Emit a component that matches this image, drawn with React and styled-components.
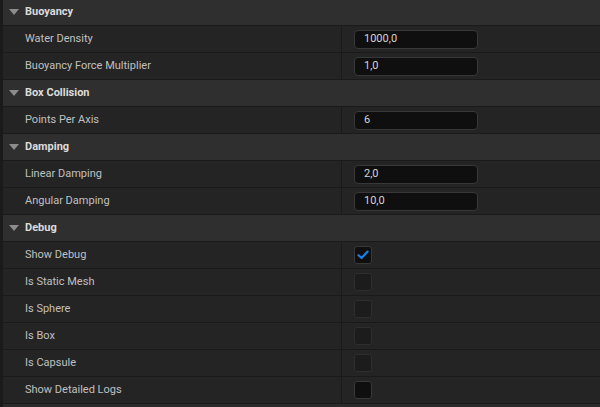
import React from 'react';
import styled, { createGlobalStyle } from 'styled-components';

const Global = createGlobalStyle`
  html, body {
    margin: 0;
    padding: 0;
    background: #1a1a1a;
    font-family: Roboto, "Liberation Sans", sans-serif;
  }
`;

const Panel = styled.div`
  width: 600px;
  height: 407px;
  background: #1a1a1a;
  padding-left: 3px;
  box-sizing: border-box;
  overflow: hidden;
`;

const Scroll = styled.div`
  margin-top: -1px;
`;

const Header = styled.div`
  height: 26px;
  border-bottom: 1px solid #1a1a1a;
  background: #2f2f2f;
  display: flex;
  align-items: center;
  color: #dcdcdc;
  font-size: 11px;
  font-weight: 700;
  padding-bottom: 1px;
  box-sizing: content-box;
  height: 25px;
`;

const Arrow = styled.span`
  width: 0;
  height: 0;
  margin-left: 6px;
  margin-right: 6px;
  margin-top: 1px;
  border-left: 5px solid transparent;
  border-right: 5px solid transparent;
  border-top: 6px solid #8c8c8c;
`;

const Row = styled.div`
  height: 26px;
  border-bottom: 1px solid #1a1a1a;
  background: #242424;
  display: grid;
  grid-template-columns: 338px 1px 1fr;
  align-items: stretch;
`;

const Label = styled.div`
  display: flex;
  align-items: center;
  padding-left: 22px;
  padding-bottom: 1px;
  color: #c0c0c0;
  font-size: 11px;
`;

const Split = styled.div`
  background: #1a1a1a;
`;

const Value = styled.div`
  display: flex;
  align-items: center;
  padding-left: 12px;
`;

const Input = styled.div`
  width: 124px;
  height: 19px;
  box-sizing: border-box;
  border: 1px solid #383838;
  border-radius: 4px;
  background: #0f0f0f;
  color: #d4d4d4;
  font-size: 11px;
  display: flex;
  align-items: center;
  padding-left: 9px;
  padding-bottom: 1px;
`;

const Check = styled.div`
  width: 18px;
  height: 18px;
  box-sizing: border-box;
  border-radius: 3px;
  border: 1px solid ${p => (p.$active ? '#383838' : '#2e2e2e')};
  background: ${p => (p.$active ? '#0f0f0f' : '#1c1c1c')};
  display: flex;
  align-items: center;
  justify-content: center;
`;

const Footer = styled.div`
  height: 3px;
  background: #2b2b2b;
`;

const sections = [
  {
    title: 'Buoyancy',
    rows: [
      { label: 'Water Density', value: '1000,0' },
      { label: 'Buoyancy Force Multiplier', value: '1,0' },
    ],
  },
  { title: 'Box Collision', rows: [{ label: 'Points Per Axis', value: '6' }] },
  {
    title: 'Damping',
    rows: [
      { label: 'Linear Damping', value: '2,0' },
      { label: 'Angular Damping', value: '10,0' },
    ],
  },
  {
    title: 'Debug',
    rows: [
      { label: 'Show Debug', check: 'on' },
      { label: 'Is Static Mesh', check: 'off' },
      { label: 'Is Sphere', check: 'off' },
      { label: 'Is Box', check: 'off' },
      { label: 'Is Capsule', check: 'off' },
      { label: 'Show Detailed Logs', check: 'hover' },
    ],
  },
];

const Tick = () => (
  <svg width="12" height="10" viewBox="0 0 12 10">
    <path d="M1.5 5.2 L4.6 8 L10.6 1.6" fill="none" stroke="#1a7fe6" strokeWidth="2.2" strokeLinecap="round" strokeLinejoin="round" />
  </svg>
);

export default function App() {
  return (
    <Panel>
      <Global />
      <Scroll>
        {sections.map(s => (
          <React.Fragment key={s.title}>
            <Header>
              <Arrow />
              {s.title}
            </Header>
            {s.rows.map(r => (
              <Row key={r.label}>
                <Label>{r.label}</Label>
                <Split />
                <Value>
                  {r.check ? (
                    <Check $active={r.check !== 'off'}>{r.check === 'on' && <Tick />}</Check>
                  ) : (
                    <Input>{r.value}</Input>
                  )}
                </Value>
              </Row>
            ))}
          </React.Fragment>
        ))}
        <Footer />
      </Scroll>
    </Panel>
  );
}
